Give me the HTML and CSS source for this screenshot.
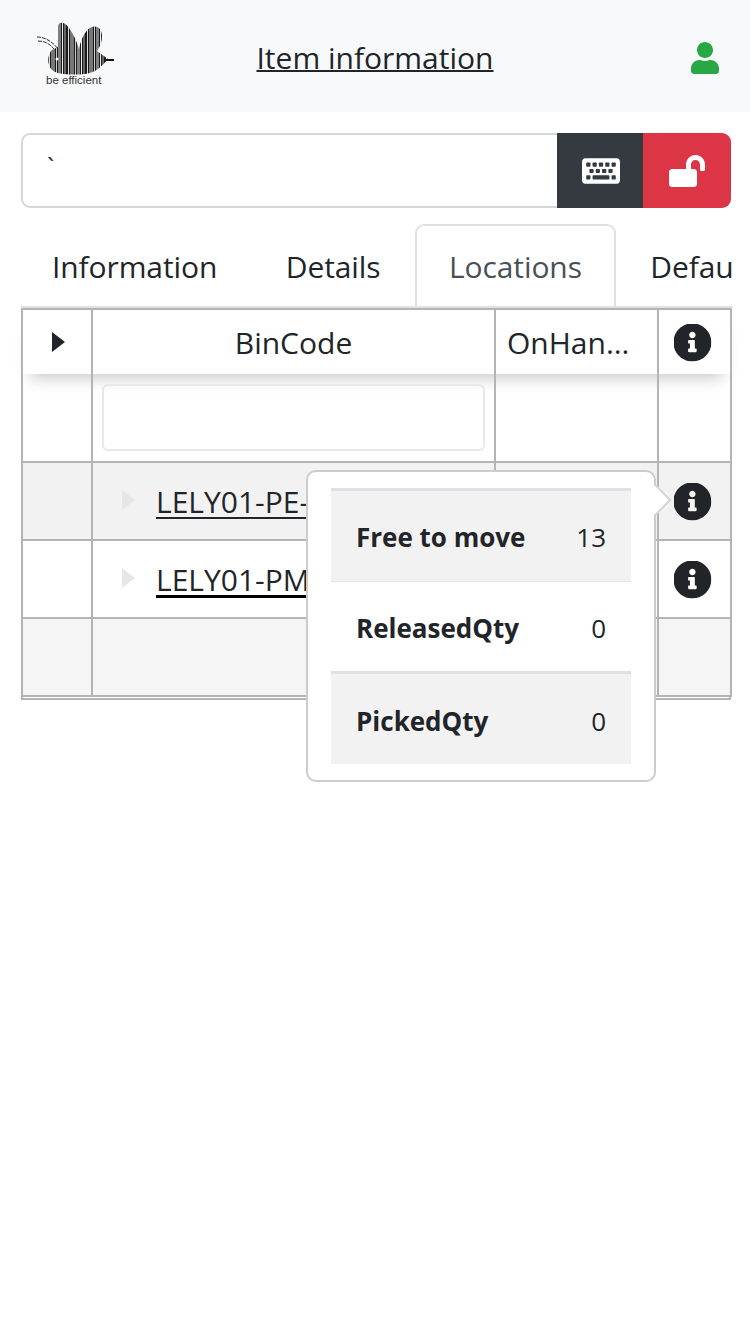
FILE: index.html
```html
<!DOCTYPE html>
<html lang="en">
<head>
  <meta charset="UTF-8">
  <meta name="viewport" content="width=device-width, initial-scale=1.0">
  <title>Item information</title>
  <link rel="stylesheet" href="styles.css">
</head>
<body>
  <svg class="defs" width="0" height="0">
    <symbol id="info-shape" viewBox="8 8 496 496">
      <path fill="#212529" d="M256 8C119.043 8 8 119.083 8 256c0 136.997 111.043 248 248 248s248-111.003 248-248C504 119.083 392.957 8 256 8zm0 110c23.196 0 42 18.804 42 42s-18.804 42-42 42-42-18.804-42-42 18.804-42 42-42zm56 254c0 6.627-5.373 12-12 12h-88c-6.627 0-12-5.373-12-12v-24c0-6.627 5.373-12 12-12h12v-64h-12c-6.627 0-12-5.373-12-12v-24c0-6.627 5.373-12 12-12h64c6.627 0 12 5.373 12 12v100h12c6.627 0 12 5.373 12 12v24z"/>
    </symbol>
  </svg>

  <header class="topbar">
    <div class="logo">
      <svg class="logo-mark" viewBox="36 20 80 54" width="80" height="54">
        <defs>
          <pattern id="bars" x="48" y="0" width="19" height="10" patternUnits="userSpaceOnUse">
            <rect width="19" height="10" fill="#1a1a1a"/>
            <rect x="1" width="1" height="10" fill="#ddd"/>
            <rect x="3" width="4" height="10" fill="#777"/>
            <rect x="8" width="1" height="10" fill="#ccc"/>
            <rect x="10" width="3" height="10" fill="#808080"/>
            <rect x="14" width="1" height="10" fill="#eee"/>
            <rect x="16" width="2" height="10" fill="#666"/>
          </pattern>
        </defs>
        <path fill="url(#bars)" d="M58 25C59 20 65 21 69 27C74 34 77 41 79 48C81 38 85 30 90 27C96 23 102 27 102 35C102 41 100 46 97 50L108 58C103 64 96 72 85 73C72 74 58 74 52 69C47 64 47 54 52 49L58 46Z"/>
        <path fill="none" stroke="#333" stroke-width="1" stroke-dasharray="4 1" d="M37 36C45 36 53 41 58 48M38 40C45 40 50 43 54 48"/>
        <path stroke="#111" stroke-width="2" d="M106 59H114"/>
        <circle cx="57" cy="58" r="1.5" fill="#fff"/>
      </svg>
      <span class="logo-text">be efficient</span>
    </div>
    <a class="page-title" href="#">Item information</a>
    <svg class="user-icon" viewBox="0 0 448 512" width="28" height="32">
      <path fill="#28a745" d="M224 256c70.7 0 128-57.3 128-128S294.7 0 224 0 96 57.3 96 128s57.3 128 128 128zm89.6 32h-16.7c-22.2 10.2-46.9 16-72.9 16s-50.6-5.8-72.9-16h-16.7C60.2 288 0 348.2 0 422.4V464c0 26.5 21.5 48 48 48h352c26.5 0 48-21.5 48-48v-41.6c0-74.2-60.2-134.4-134.4-134.4z"/>
    </svg>
  </header>

  <main class="content">
    <div class="search-group">
      <input class="search-input" type="text" value="`">
      <button class="btn btn-dark" type="button">
        <svg viewBox="0 0 576 512" width="38" height="34">
          <path fill="#fff" d="M528 448H48c-26.5 0-48-21.5-48-48V112c0-26.5 21.500-48 48-48h480c26.500 0 48 21.500 48 48v288c0 26.500-21.500 48-48 48z"/>
          <g fill="#343a40">
            <rect x="64" y="128" width="64" height="64" rx="12"/>
            <rect x="160" y="128" width="64" height="64" rx="12"/>
            <rect x="256" y="128" width="64" height="64" rx="12"/>
            <rect x="352" y="128" width="64" height="64" rx="12"/>
            <rect x="448" y="128" width="64" height="64" rx="12"/>
            <rect x="112" y="224" width="64" height="64" rx="12"/>
            <rect x="208" y="224" width="64" height="64" rx="12"/>
            <rect x="304" y="224" width="64" height="64" rx="12"/>
            <rect x="400" y="224" width="64" height="64" rx="12"/>
            <rect x="64" y="320" width="64" height="64" rx="12"/>
            <rect x="160" y="320" width="256" height="64" rx="12"/>
            <rect x="448" y="320" width="64" height="64" rx="12"/>
          </g>
        </svg>
      </button>
      <button class="btn btn-danger" type="button">
        <svg viewBox="0 0 576 512" width="36" height="32">
          <path fill="#fff" d="M423.5 0C339.5.3 272 69.500 272 153.500V224H48c-26.500 0-48 21.500-48 48v192c0 26.500 21.500 48 48 48h352c26.500 0 48-21.500 48-48V272c0-26.500-21.500-48-48-48h-48v-71.100c0-39.600 31.700-72.500 71.300-72.900 40-.4 72.700 32.100 72.700 72v80c0 13.300 10.700 24 24 24h32c13.300 0 24-10.700 24-24v-80C576 68 507.500-.3 423.500 0z"/>
        </svg>
      </button>
    </div>

    <nav class="tabs">
      <a class="tab tab-first" href="#">Information</a>
      <a class="tab" href="#">Details</a>
      <a class="tab tab-active" href="#">Locations</a>
      <a class="tab" href="#">Defaults</a>
    </nav>

    <div class="grid-wrap">
      <table class="grid">
        <colgroup>
          <col class="col-expand">
          <col class="col-bin">
          <col class="col-qty">
          <col class="col-info">
        </colgroup>
        <thead>
          <tr class="head-row">
            <th><span class="caret"></span></th>
            <th>BinCode</th>
            <th class="cut">OnHandQty</th>
            <th>
              <svg class="info" viewBox="8 8 496 496" width="38" height="38"><use href="#info-shape"/></svg>
            </th>
          </tr>
        </thead>
        <tbody>
          <tr class="filter-row">
            <td></td>
            <td><input class="filter-input" type="text"></td>
            <td></td>
            <td></td>
          </tr>
          <tr class="data-row row-odd">
            <td></td>
            <td class="bin-cell"><span class="caret caret-soft"></span><a class="bin-link" href="#">LELY01-PE-01</a></td>
            <td></td>
            <td>
              <svg class="info" viewBox="8 8 496 496" width="38" height="38"><use href="#info-shape"/></svg>
            </td>
          </tr>
          <tr class="data-row">
            <td></td>
            <td class="bin-cell"><span class="caret caret-soft"></span><a class="bin-link bin-link-thick" href="#">LELY01-PM-01</a></td>
            <td></td>
            <td>
              <svg class="info" viewBox="8 8 496 496" width="38" height="38"><use href="#info-shape"/></svg>
            </td>
          </tr>
          <tr class="data-row row-foot">
            <td></td>
            <td></td>
            <td></td>
            <td></td>
          </tr>
        </tbody>
      </table>
      <div class="grid-end"></div>

      <div class="popover">
        <span class="popover-arrow"></span>
        <table class="qty-table">
          <tr class="qty-shaded qty-strong qty-first">
            <th>Free to move</th>
            <td>13</td>
          </tr>
          <tr class="qty-thin">
            <th>ReleasedQty</th>
            <td>0</td>
          </tr>
          <tr class="qty-shaded qty-strong qty-last">
            <th>PickedQty</th>
            <td>0</td>
          </tr>
        </table>
      </div>
    </div>
  </main>
</body>
</html>
```

FILE: styles.css
```css
* {
  box-sizing: border-box;
}
body {
  margin: 0;
  font-family: "Open Sans", "Noto Sans", sans-serif;
  font-size: 30px;
  color: #212529;
  background-color: #fff;
}
a {
  color: inherit;
}
.defs {
  position: absolute;
}

/* top bar */
.topbar {
  display: grid;
  grid-template-columns: 1fr auto 1fr;
  align-items: center;
  height: 112px;
  padding: 0 36px;
  background-color: #f8f9fa;
}
.logo {
  display: flex;
  flex-direction: column;
  width: 80px;
  margin-top: -6px;
}
.logo-mark {
  display: block;
}
.logo-text {
  margin: -1px 0 0 10px;
  font-family: "Liberation Sans", Arial, sans-serif;
  font-size: 11.5px;
  line-height: 12px;
  white-space: nowrap;
  color: #333;
}
.page-title {
  margin-top: 4px;
  line-height: 40px;
  text-decoration-thickness: 2px;
}
.user-icon {
  justify-self: end;
  margin: 3px -5px 0 0;
}

/* search row */
.content {
  padding: 21px 19px 0 21px;
}
.search-group {
  display: flex;
  height: 75px;
}
.search-input {
  flex: 1;
  min-width: 0;
  padding: 0 24px 8px;
  border: 2px solid #d4d8dc;
  border-right: 0;
  border-radius: 9px 0 0 9px;
  font-family: inherit;
  font-size: 26px;
  color: #1d3c5a;
}
.btn {
  display: flex;
  align-items: center;
  justify-content: center;
  padding: 0;
  border: 0;
}
.btn-dark {
  width: 86px;
  padding-left: 2px;
  background-color: #343a40;
}
.btn-danger {
  width: 88px;
  border-radius: 0 9px 9px 0;
  background-color: #dc3545;
}

/* tabs */
.tabs {
  display: flex;
  height: 84px;
  margin: 16px -2px 0 0;
  overflow: hidden;
  white-space: nowrap;
  border-bottom: 2px solid #dee2e6;
}
.tab {
  flex: none;
  height: 84px;
  padding: 0 32px;
  margin-right: 0.5px;
  line-height: 82px;
  letter-spacing: -0.1px;
  text-decoration: none;
  border: 2px solid transparent;
  border-radius: 9px 9px 0 0;
}
.tab-first {
  margin-left: -3px;
}
.tab-active {
  color: #495057;
  background-color: #fff;
  border-color: #dee2e6 #dee2e6 #fff;
}

/* location grid */
.grid-wrap {
  position: relative;
  min-height: 480px;
}
.grid {
  width: 709px;
  table-layout: fixed;
  border-collapse: collapse;
}
.col-expand {
  width: 70px;
}
.col-bin {
  width: 403px;
}
.col-qty {
  width: 163px;
}
.col-info {
  width: 73px;
}
.grid th,
.grid td {
  padding: 0;
  border: 2px solid #b4b4b4;
  text-align: center;
}
.grid th {
  font-weight: 400;
  border-bottom: 0;
}
.grid thead {
  box-shadow: 0 12px 16px -8px rgba(0, 0, 0, 0.22);
}
.filter-row td {
  border-top: 0;
}
.grid-end {
  width: 710px;
  height: 3px;
  border: 2px solid #b4b4b4;
  border-width: 0 2px 2px;
}
.head-row {
  height: 65px;
}
.cut {
  padding: 0 26px 0 11px !important;
  overflow: hidden;
  text-overflow: ellipsis;
  white-space: nowrap;
}
.caret {
  display: inline-block;
  margin: 0 0 6px 3px;
  border-style: solid;
  border-width: 10px 0 10px 13px;
  border-color: transparent transparent transparent #212529;
  vertical-align: middle;
}
.caret-soft {
  margin: 0 21px 8px 1px;
  border-left-color: #e6e6e6;
}
.info {
  display: block;
  margin: 2px 0 0 15px;
}
.filter-row {
  height: 88px;
}
.filter-input {
  display: block;
  width: 383px;
  height: 67px;
  margin: 0 auto;
  border: 2px solid #e8e8e8;
  border-radius: 6px;
  background: transparent;
}
.data-row {
  height: 78px;
}
.row-odd {
  background-color: #f2f2f2;
}
.row-foot {
  background-color: #f5f5f5;
}
.bin-cell {
  padding-left: 28px !important;
  text-align: left !important;
}
.bin-link {
  text-decoration-thickness: 2px;
  text-underline-offset: 4px;
}
.bin-link-thick {
  text-decoration-color: #000;
  text-decoration-thickness: 3px;
}

/* quantity popover */
.popover {
  position: absolute;
  top: 162px;
  left: 285px;
  width: 350px;
  height: 312px;
  padding: 16px 23px;
  background-color: #fff;
  border: 2px solid #ccc;
  border-radius: 10px;
}
.popover-arrow {
  position: absolute;
  top: 17px;
  right: -13px;
  width: 22px;
  height: 22px;
  background-color: #fff;
  border-top: 2px solid #d4d4d4;
  border-right: 2px solid #d4d4d4;
  transform: rotate(45deg);
}
.qty-table {
  width: 300px;
  border-collapse: collapse;
  table-layout: fixed;
}
.qty-table th,
.qty-table td {
  height: 91px;
  padding: 2px 25px 0;
}
.qty-first th,
.qty-first td {
  height: 92px;
  padding-top: 1px;
}
.qty-last th,
.qty-last td {
  padding-top: 4px;
}
.qty-table th {
  width: 232px;
  padding-right: 0;
  text-align: left;
  font-size: 26px;
  font-weight: 700;
  white-space: nowrap;
}
.qty-table td {
  padding-left: 0;
  text-align: right;
  font-size: 26px;
  font-weight: 400;
}
.qty-shaded {
  background-color: #f2f2f2;
}
.qty-strong th,
.qty-strong td {
  border-top: 3px solid #dee2e6;
}
.qty-thin th,
.qty-thin td {
  border-top: 1px solid #e4e4e4;
}
```
